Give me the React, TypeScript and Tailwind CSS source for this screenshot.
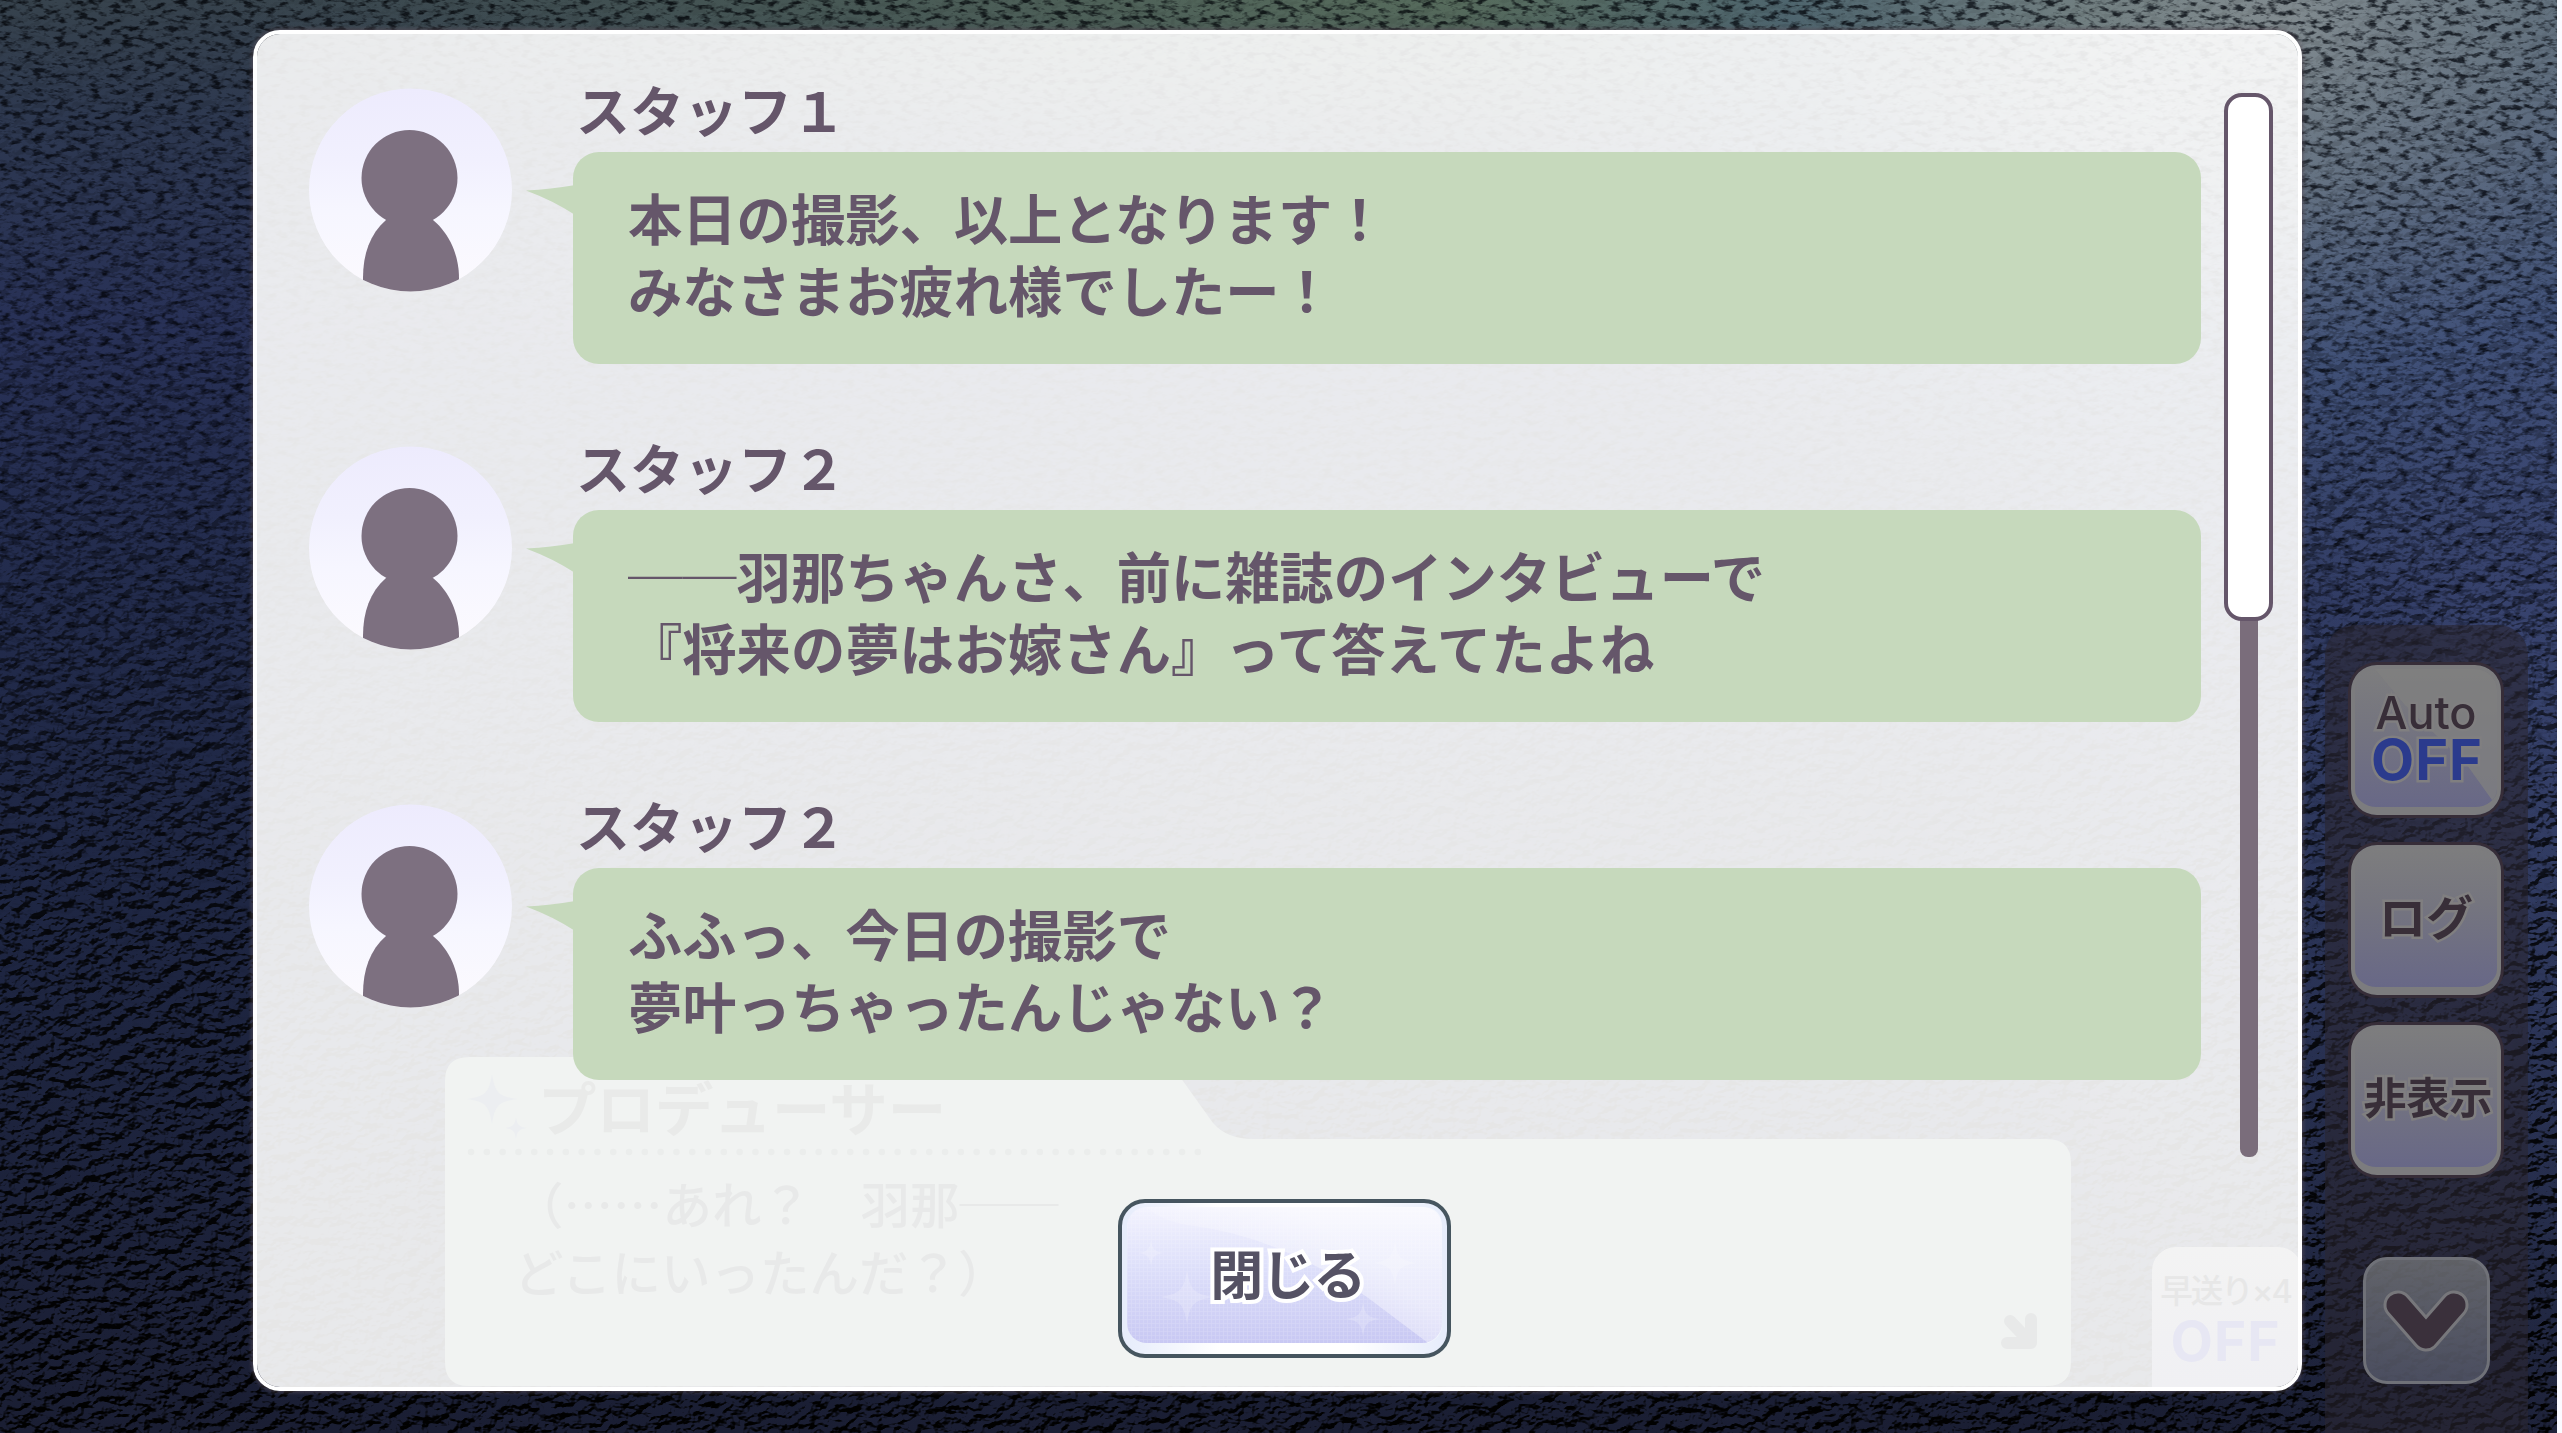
import type { ReactNode } from "react";
import clsx from "clsx";

type LogEntry = {
  name: string;
  lines: string[];
};

const LOG: LogEntry[] = [
  { name: "スタッフ１", lines: ["本日の撮影、以上となります！", "みなさまお疲れ様でしたー！"] },
  { name: "スタッフ２", lines: ["──羽那ちゃんさ、前に雑誌のインタビューで", "『将来の夢はお嫁さん』って答えてたよね"] },
  { name: "スタッフ２", lines: ["ふふっ、今日の撮影で", "夢叶っちゃったんじゃない？"] },
];

const SPARK = "M0 -1C.12 -.25 .25 -.12 1 0C.25 .12 .12 .25 0 1C-.12 .25 -.25 .12 -1 0C-.25 -.12 -.12 -.25 0 -1Z";

function Backdrop() {
  return (
    <div className="absolute inset-y-0 left-0 w-[2557px] overflow-hidden bg-[linear-gradient(180deg,#37434d_0px,#2d3850_120px,#283157_320px,#222b4c_600px,#1e2643_900px,#1c223b_1200px,#1a1e33_1433px)]">
      <div className="absolute inset-0 bg-[radial-gradient(1300px_220px_at_1500px_-20px,#5a705e_0%,rgba(90,112,94,0)_100%)]" />
      <div className="absolute inset-0 bg-[radial-gradient(820px_580px_at_2280px_20px,#87908f_0%,rgba(116,130,134,0.85)_28%,rgba(76,102,130,0.5)_60%,rgba(60,84,120,0)_100%)]" />
      <div className="absolute inset-0 bg-[radial-gradient(600px_900px_at_2520px_650px,rgba(78,92,146,0.5)_0%,rgba(72,92,150,0)_100%)]" />
      <svg className="absolute inset-0 h-full w-full mix-blend-multiply">
        <filter id="fine" x="0" y="0" width="100%" height="100%" colorInterpolationFilters="sRGB">
          <feTurbulence type="fractalNoise" baseFrequency="0.09 0.19" numOctaves="3" seed="7" />
          <feColorMatrix type="matrix" values="0 0 0 0 0.04  0 0 0 0 0.07  0 0 0 0 0.12  4.4 0 0 0 -2.15" />
        </filter>
        <filter id="leather" x="0" y="0" width="100%" height="100%" colorInterpolationFilters="sRGB">
          <feTurbulence type="fractalNoise" baseFrequency="0.075 0.095" numOctaves="3" seed="11" />
          <feColorMatrix type="matrix" values="0 0 0 0 0  0 0 0 0 0  0 0 0 0 0  1.6 0 0 0 -0.3" />
          <feDiffuseLighting surfaceScale="8" diffuseConstant="1.45" lightingColor="#ffffff">
            <feDistantLight azimuth="245" elevation="50" />
          </feDiffuseLighting>
        </filter>
        <linearGradient id="fade" x1="0" y1="0" x2="0" y2="1">
          <stop offset="0" stopColor="#111" />
          <stop offset=".3" stopColor="#444" />
          <stop offset=".65" stopColor="#ccc" />
          <stop offset="1" stopColor="#fff" />
        </linearGradient>
        <linearGradient id="fadeUp" x1="0" y1="0" x2="0" y2="1">
          <stop offset="0" stopColor="#fff" />
          <stop offset=".4" stopColor="#ddd" />
          <stop offset=".8" stopColor="#444" />
        </linearGradient>
        <mask id="upper">
          <rect width="100%" height="100%" fill="url(#fadeUp)" />
        </mask>
        <mask id="lower">
          <rect width="100%" height="100%" fill="url(#fade)" />
        </mask>
        <g mask="url(#upper)" opacity=".8">
          <rect width="100%" height="100%" filter="url(#fine)" />
        </g>
        <g mask="url(#lower)">
          <rect width="100%" height="100%" filter="url(#leather)" />
        </g>
      </svg>
    </div>
  );
}

function Avatar() {
  return (
    <svg viewBox="0 0 204 204" className="mt-3 h-[204px] w-[204px] shrink-0">
      <defs>
        <linearGradient id="face" x1="0" y1="0" x2="0" y2="1">
          <stop offset="0" stopColor="#edebfd" />
          <stop offset=".35" stopColor="#f1f0fe" />
          <stop offset=".6" stopColor="#f6f6ff" />
          <stop offset="1" stopColor="#fcfafe" />
        </linearGradient>
        <clipPath id="round">
          <circle cx="101.5" cy="102" r="101.5" />
        </clipPath>
      </defs>
      <circle cx="101.5" cy="102" r="101.5" fill="url(#face)" />
      <g clipPath="url(#round)" fill="#7d7080">
        <circle cx="100.5" cy="90" r="48" />
        <path d="M77 132H124C141 146 150 168 150 190V204H54V190C54 166 61 146 77 132Z" />
      </g>
    </svg>
  );
}

function Message({ name, lines }: LogEntry) {
  return (
    <li className="flex items-start">
      <Avatar />
      {/* the tail is part of the row: it fills most of the space between avatar and bubble */}
      <svg viewBox="0 0 48 32" className="mt-[108px] ml-[13px] h-8 w-12 shrink-0">
        <path d="M0 6.5Q26 5 49 1V31Q28 17 0 6.5Z" fill="#c6d9bc" />
      </svg>
      <div className="-ml-px flex w-[1628px] flex-col gap-[6px]">
        <div className="h-[70px] pl-[3px] text-[54px] leading-[66px]">{name}</div>
        <div className="h-[212px] rounded-[26px] bg-[#c6d9bc] pt-[29px] pl-[55px] text-[54.3px] leading-[72px] whitespace-nowrap">
          {lines.map((line) => (
            <p key={line}>{line}</p>
          ))}
        </div>
      </div>
    </li>
  );
}

// the talk window that stays faintly visible under the log sheet
function FadedTalkWindow() {
  return (
    <div className="relative mb-px h-[329px] w-[1626px] shrink-0 font-medium whitespace-nowrap text-[#e8e9e9]">
      <svg viewBox="0 0 1626 329" className="absolute inset-0 h-full w-full">
        <path
          d="M24 0H690Q722 0 738 24L768 66Q782 82 808 82H1602Q1626 82 1626 106V305Q1626 329 1602 329H24Q0 329 0 305V24Q0 0 24 0Z"
          fill="#f1f3f2"
        />
        <path d={SPARK} fill="#eceef1" transform="translate(47 42) scale(25)" />
        <path d={SPARK} fill="#eceef1" transform="translate(71 71) scale(11)" />
        <line x1="26" y1="95" x2="754" y2="95" stroke="#ebedec" strokeWidth="6.5" strokeLinecap="round" strokeDasharray="0.1 15.7" />
        <path d="M1565 264L1584 284M1586 262V286H1562" stroke="#e8e9e9" strokeWidth="12" fill="none" strokeLinecap="round" strokeLinejoin="round" />
      </svg>
      <p className="relative pt-[14px] pl-[93px] text-[58.5px] leading-[70px] font-bold text-[#e9eae9]">プロデューサー</p>
      <p className="relative mt-[28px] pl-[69px] text-[49.5px] leading-[68px]">（……あれ？　羽那──</p>
      <p className="relative pl-[69px] text-[49.5px] leading-[68px]">どこにいったんだ？）</p>
    </div>
  );
}

function FadedSkipButton() {
  return (
    <div className="flex h-[140px] w-[150px] shrink-0 flex-col items-center rounded-t-[24px] bg-[linear-gradient(180deg,#f3f3f3,#f0f0f3)] pt-[24px] pr-[3px] whitespace-nowrap">
      <span className="font-['Inter','Noto_Sans_CJK_JP',sans-serif] text-[32.5px] leading-[42px] font-medium tracking-[-2px] text-[#e7e7e7]">早送り×4</span>
      <span className="font-['Inter'] text-[55px] leading-[56px] tracking-[1px] text-[#e7e7f3]">OFF</span>
    </div>
  );
}

function Scrollbar() {
  return (
    <div className="mt-[17px] grid h-[1064px] w-[49px] shrink-0 justify-items-center">
      <div className="col-start-1 row-start-1 w-[18px] rounded-[8px] bg-[#7a6d7b]" />
      <div className="col-start-1 row-start-1 h-[528px] w-full rounded-[18px] border-4 border-[#65566a] bg-white" />
    </div>
  );
}

function CloseButton() {
  return (
    <button className="relative ml-[14px] flex h-[159px] w-[333px] items-center justify-center self-center overflow-hidden rounded-[27px] border-[4.5px] border-[#46555f] bg-[linear-gradient(90deg,#e6ecfb,#ffffff_30%,#ffffff_70%,#e6ecfb)] pb-[14px] pl-[6px]">
      <svg viewBox="0 0 315 136" className="absolute top-1 left-1 h-[136px] w-[317px]">
        <defs>
          <linearGradient id="btn" x1="0" y1="0" x2="0" y2="1">
            <stop offset="0" stopColor="#f3f3fe" />
            <stop offset=".45" stopColor="#dddffa" />
            <stop offset="1" stopColor="#c8c8f3" />
          </linearGradient>
          <linearGradient id="sheen" x1="0" y1=".3" x2=".5" y2="0">
            <stop offset="0" stopColor="#ffffff" stopOpacity="0" />
            <stop offset="1" stopColor="#ffffff" stopOpacity=".5" />
          </linearGradient>
          <pattern id="mesh" width="4" height="4" patternUnits="userSpaceOnUse">
            <path d="M0 0H4M0 0V4" stroke="#ffffff" strokeOpacity=".16" strokeWidth="1.6" />
          </pattern>
        </defs>
        <rect width="315" height="136" rx="20" fill="url(#btn)" />
        <path d="M20 0H295Q315 0 315 20V118Q315 130 301 136L240 90Q150 28 60 18Q30 12 20 0Z" fill="url(#sheen)" />
        <rect width="315" height="136" rx="20" fill="url(#mesh)" />
        <g fill="#ffffff" fillOpacity=".2">
          <path d={SPARK} transform="translate(60 90) scale(27)" />
          <path d={SPARK} transform="translate(24 46) scale(13)" />
          <path d={SPARK} transform="translate(268 56) scale(22)" />
          <path d={SPARK} transform="translate(236 112) scale(17)" />
        </g>
      </svg>
      <span className="relative text-[53px] leading-[60px] tracking-[-1.5px] text-[#555264] [-webkit-text-stroke:8px_#ffffff] [paint-order:stroke_fill]">
        閉じる
      </span>
    </button>
  );
}

function SideButton({ children, facet }: { children: ReactNode; facet?: boolean }) {
  return (
    <div className="relative h-[150px] w-[150px] overflow-hidden rounded-[26px] border-4 border-b-[8px] border-[#7c7c7e] bg-[linear-gradient(180deg,#7d7d7e_0%,#75757f_40%,#686887_100%)] text-[#382e38] shadow-[0_0_0_3px_#362d38] [-webkit-text-stroke:5px_#807f80] [paint-order:stroke_fill]">
      {facet && (
        <svg viewBox="0 0 142 138" className="absolute inset-0 h-full w-full">
          <path d="M20 0H142V138L112 96L50 36Z" fill="#7f7f7f" fillOpacity=".8" />
        </svg>
      )}
      <div className="relative flex h-full flex-col items-center justify-center">{children}</div>
    </div>
  );
}

function SideMenu() {
  return (
    <aside className="relative flex h-[808px] w-[203px] flex-col items-center gap-[30px] self-end rounded-t-[30px] bg-[#2a2632]/60 pt-10 pr-[1px] whitespace-nowrap">
      <SideButton facet>
        <span className="font-['Inter'] text-[45px] leading-[46px] font-medium">Auto</span>
        <span className="pb-[2px] pl-[2px] font-['Inter'] text-[56px] leading-[48px] tracking-[1px] text-[#2b3b8d]">OFF</span>
      </SideButton>
      <SideButton>
        <span className="pb-[6px] text-[47px] leading-[56px]">ログ</span>
      </SideButton>
      <SideButton>
        <span className="pb-[6px] pl-[4px] text-[43px] leading-[56px]">非表示</span>
      </SideButton>
      <div className="mt-[52px] flex h-[127px] w-[127px] items-center justify-center rounded-[24px] border-[3px] border-[#6f7178] bg-[linear-gradient(180deg,rgba(112,114,118,0.8),rgba(84,88,106,0.8))]">
        <svg viewBox="0 0 90 72" className="mt-[7px] h-[72px] w-[90px]">
          <path d="M17 17L45 49L73 17" fill="none" stroke="#77777b" strokeWidth="29" strokeLinecap="round" strokeLinejoin="round" />
          <path d="M17 17L45 49L73 17" fill="none" stroke="#3a303b" strokeWidth="23" strokeLinecap="round" strokeLinejoin="round" />
        </svg>
      </div>
    </aside>
  );
}

export default function App() {
  return (
    <div
      className={clsx(
        "relative flex h-[1433px] w-[2562px] items-start gap-[23px] overflow-hidden bg-[#fbfaff] pt-[30px] pl-[253px]",
        "font-['Noto_Sans_CJK_JP',sans-serif] font-bold text-[#65566a]"
      )}
    >
      <Backdrop />

      <main className="relative flex h-[1361px] w-[2049px] shrink-0 flex-col gap-[42px] overflow-hidden rounded-[27px] border-4 border-white bg-white/90 bg-clip-padding pt-[42px] shadow-[0_0_4px_1px_rgba(90,80,90,0.8)]">
        <div className="absolute inset-0 flex items-end gap-[81px] pl-[188px]">
          <FadedTalkWindow />
          <FadedSkipButton />
        </div>
        <div className="relative flex items-start gap-[23px] pl-[52px]">
          <ul className="flex flex-col gap-[70px]">
            {LOG.map((entry, idx) => (
              <Message key={idx} {...entry} />
            ))}
          </ul>
          <Scrollbar />
        </div>
        <CloseButton />
      </main>

      <SideMenu />
    </div>
  );
}
